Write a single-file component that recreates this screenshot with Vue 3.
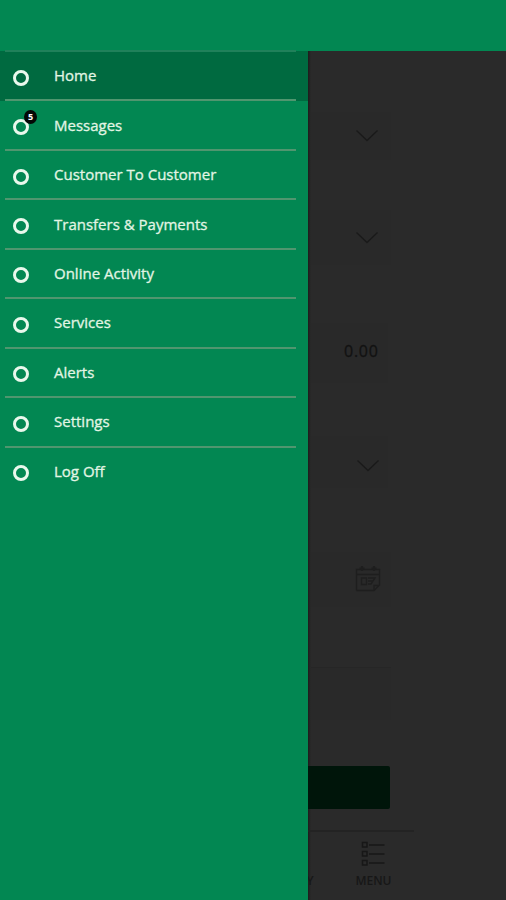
<script setup>
const items = [
  { label: 'Home', active: true },
  { label: 'Messages', badge: 5 },
  { label: 'Customer To Customer' },
  { label: 'Transfers & Payments' },
  { label: 'Online Activity' },
  { label: 'Services' },
  { label: 'Alerts' },
  { label: 'Settings' },
  { label: 'Log Off' },
]
</script>

<template>
  <div class="screen">
    <header class="topbar"></header>
    <div class="body">
      <nav class="drawer">
        <a v-for="item in items" :key="item.label" class="item" :class="{ active: item.active }">
          <span class="ring">
            <span v-if="item.badge" class="badge">{{ item.badge }}</span>
          </span>
          <span class="label">{{ item.label }}</span>
        </a>
      </nav>
      <main class="page">
        <div class="form">
          <div class="field first">
            <svg class="chevron" viewBox="0 0 24 14"><path d="M1.5 1.5 12 11.5 22.5 1.5" /></svg>
          </div>
          <div class="field second">
            <svg class="chevron" viewBox="0 0 24 14"><path d="M1.5 1.5 12 11.5 22.5 1.5" /></svg>
          </div>
          <div class="field amount">0.00</div>
          <div class="field third">
            <svg class="chevron" viewBox="0 0 24 14"><path d="M1.5 1.5 12 11.5 22.5 1.5" /></svg>
          </div>
          <div class="field date">
            <svg class="calendar" viewBox="0 0 26 28">
              <path d="M1.5 25.500V4.500H24.500V20L19 25.500H1.500M1.500 9.500H24.500M19 25.500V20.500H24" />
              <path class="bold" d="M4.500 3.500H9.500M16.500 3.500H21.500M7 1V6M19 1V6" />
              <path d="M6.500 13H11.500V19.500H6.500ZM13 13H20L16 19H13M13 16H18" />
            </svg>
          </div>
          <div class="field note"></div>
          <div class="submit"></div>
        </div>
        <footer class="tabs">
          <span class="tab cut">Y</span>
          <span class="tab menu">
            <svg class="list" viewBox="0 0 26 26">
              <path d="M2.500 1.500H7V6H2.500ZM2.500 10.500H7V15H2.500ZM2.500 19.500H7V24H2.500Z" />
              <path d="M9 4H24.500M9 13H24.500M9 22H24.500" />
            </svg>
            MENU
          </span>
        </footer>
      </main>
    </div>
  </div>
</template>

<style>
body {
  margin: 0;
}
</style>

<style scoped>
.screen {
  width: 506px;
  height: 900px;
  overflow: hidden;
  display: flex;
  flex-direction: column;
  background: #2a2a2a;
  font-family: 'Open Sans', 'Noto Sans', sans-serif;
}
.topbar {
  flex: none;
  height: 51px;
  background: #028752;
}
.body {
  flex: 1;
  display: flex;
  min-height: 0;
}
.drawer {
  flex: none;
  width: 307.500px;
  background: #028752;
}
.item {
  position: relative;
  display: flex;
  align-items: center;
  box-sizing: border-box;
  height: 49.450px;
  padding-left: 13px;
  color: #e2f5e4;
}
.item::after {
  content: '';
  position: absolute;
  left: 5px;
  right: 11.500px;
  bottom: -1px;
  height: 2px;
  background: #50966f;
  z-index: 1;
}
.item:last-child::after {
  display: none;
}
.item.active {
  background: #006a40;
  box-shadow: 0 1px #006a40;
}
.item.active::before {
  content: '';
  position: absolute;
  left: 5px;
  right: 11.500px;
  top: -1px;
  height: 2px;
  background: #20815a;
}
.ring {
  position: relative;
  box-sizing: border-box;
  width: 16px;
  height: 16px;
  margin-top: 4px;
  border: 3px solid #e9f8ec;
  border-radius: 50%;
}
.badge {
  position: absolute;
  left: 8px;
  top: -12px;
  width: 13px;
  height: 14px;
  border-radius: 50%;
  background: #030806;
  color: #fff;
  font-size: 9px;
  font-weight: 700;
  line-height: 14px;
  text-align: center;
}
.label {
  margin: 0 0 1px 25px;
  font-size: 15px;
  line-height: 20px;
  white-space: nowrap;
  -webkit-text-stroke: 0.3px #e2f5e4;
}
.page {
  flex: 1;
  display: flex;
  flex-direction: column;
  overflow: hidden;
  background: linear-gradient(to right, #1e1b1c, #2a2a2a 3px);
}
.form {
  width: 83px;
  height: 779px;
  padding-top: 61px;
  box-sizing: border-box;
}
.field {
  display: flex;
  align-items: center;
  justify-content: flex-end;
  box-sizing: border-box;
  background: #292929;
  margin-left: 3px;
}
.first {
  height: 48px;
  padding-right: 12px;
}
.second {
  height: 55px;
  margin-top: 50px;
  padding-right: 12px;
}
.amount {
  height: 60px;
  width: 77px;
  margin-top: 58px;
  padding: 0 9px 4px 0;
  color: #121212;
  font-size: 16px;
  letter-spacing: 0.700px;
  -webkit-text-stroke: 0.3px #121212;
}
.third {
  height: 52px;
  width: 77px;
  margin-top: 53px;
  padding: 7px 8px 0 0;
}
.date {
  height: 55px;
  margin-top: 64px;
  padding: 0 10px 2px 0;
}
.note {
  height: 53px;
  margin-top: 60px;
  border-top: 1px solid #262626;
}
.submit {
  width: 82px;
  height: 43px;
  margin-top: 46px;
  border-radius: 0 2px 2px 0;
  background: #00150a;
}
.chevron {
  width: 24px;
  height: 14px;
  fill: none;
  stroke: #1a1a1a;
  stroke-width: 1.400;
}
.calendar {
  width: 26px;
  height: 28px;
  fill: none;
  stroke: #1e1e1e;
  stroke-width: 1.400;
}
.calendar .bold {
  stroke-width: 2.200;
}
.tabs {
  display: flex;
  align-items: flex-end;
  justify-content: space-between;
  box-sizing: border-box;
  width: 106px;
  height: 62px;
  padding: 0 22px 3px 0;
  border-top: 2px solid #232323;
  color: #171717;
  font-size: 12px;
  font-weight: 600;
  line-height: 16px;
}
.tab {
  display: flex;
  flex-direction: column;
  align-items: center;
}
.cut {
  margin-left: -1px;
}
.list {
  width: 26px;
  height: 26px;
  margin-bottom: 6px;
  fill: none;
  stroke: #171717;
  stroke-width: 1.500;
}
</style>
